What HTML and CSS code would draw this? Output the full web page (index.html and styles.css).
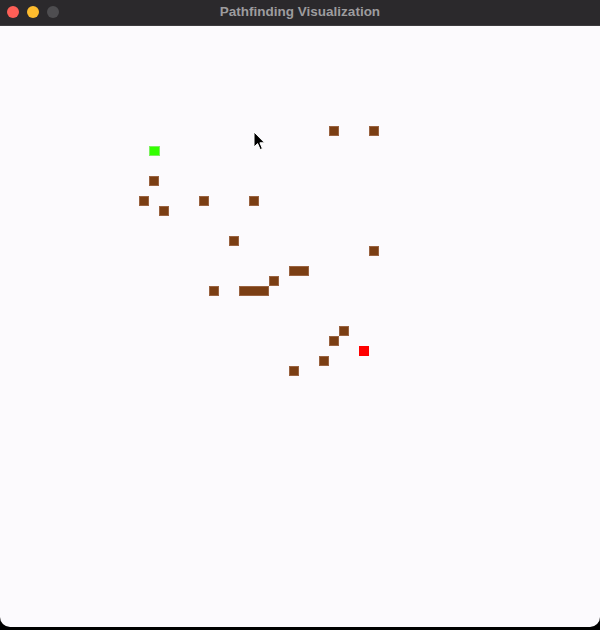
FILE: index.html
```html
<!DOCTYPE html>
<html>
<head>
<meta charset="utf-8">
<title>Pathfinding Visualization</title>
<link rel="stylesheet" href="styles.css">
</head>
<body>
<div class="window">
  <div class="titlebar">
    <div class="lights">
      <span class="light red"></span>
      <span class="light yellow"></span>
      <span class="light gray"></span>
    </div>
    <div class="title">Pathfinding Visualization</div>
  </div>
  <div class="canvas">
    <div class="grid">
      <div class="cell wall" style="grid-area:11/34/12/35"></div>
      <div class="cell wall" style="grid-area:11/38/12/39"></div>
      <div class="cell start" style="grid-area:13/16/14/17"></div>
      <div class="cell wall" style="grid-area:16/16/17/17"></div>
      <div class="cell wall" style="grid-area:18/15/19/16"></div>
      <div class="cell wall" style="grid-area:19/17/20/18"></div>
      <div class="cell wall" style="grid-area:18/21/19/22"></div>
      <div class="cell wall" style="grid-area:18/26/19/27"></div>
      <div class="cell wall" style="grid-area:22/24/23/25"></div>
      <div class="cell wall" style="grid-area:23/38/24/39"></div>
      <div class="cell wall" style="grid-area:25/30/26/32"></div>
      <div class="cell wall" style="grid-area:26/28/27/29"></div>
      <div class="cell wall" style="grid-area:27/22/28/23"></div>
      <div class="cell wall" style="grid-area:27/25/28/28"></div>
      <div class="cell wall" style="grid-area:31/35/32/36"></div>
      <div class="cell wall" style="grid-area:32/34/33/35"></div>
      <div class="cell end" style="grid-area:33/37/34/38"></div>
      <div class="cell wall" style="grid-area:34/33/35/34"></div>
      <div class="cell wall" style="grid-area:35/30/36/31"></div>
    </div>
    <svg class="cursor" width="14" height="21" viewBox="0 0 14 21">
      <path d="M1 1 L1 16 L4.6 12.6 L7.2 18.6 L9.4 17.6 L6.9 11.8 L11.6 11.8 Z" fill="#000" stroke="#fff" stroke-width="1" stroke-linejoin="round"/>
    </svg>
  </div>
</div>
</body>
</html>
```

FILE: styles.css
```css
html, body {
  margin: 0;
  padding: 0;
  background: #000;
}
.window {
  width: 600px;
  height: 627px;
  background: #fcfafd;
  border-radius: 0 0 10px 10px;
  overflow: hidden;
  display: flex;
  flex-direction: column;
}
.titlebar {
  height: 25px;
  background: #2b292c;
  border-bottom: 1px solid #3d3b3e;
  position: relative;
  display: flex;
  align-items: center;
  justify-content: center;
  flex: none;
}
.lights {
  position: absolute;
  left: 7px;
  top: 6px;
  display: flex;
  gap: 8px;
}
.light {
  width: 12px;
  height: 12px;
  border-radius: 50%;
  display: block;
}
.light.red { background: #fe5f57; }
.light.yellow { background: #febc2e; }
.light.gray { background: #4e4d50; }
.title {
  font-family: "Liberation Sans", Arial, sans-serif;
  font-weight: bold;
  font-size: 13.5px;
  color: #9d9c9e;
  line-height: 25px;
  margin-top: -2px;
}
.canvas {
  flex: 1;
  position: relative;
}
.grid {
  display: grid;
  grid-template-columns: repeat(61, 10px);
  grid-template-rows: repeat(60, 10px);
  margin-left: -1px;
}
.cell {
  box-sizing: border-box;
}
.wall {
  background: #7b3e14;
  box-shadow: inset 0 0 0 1px #9a6240;
}
.start {
  background: #33ff00;
  box-shadow: inset 0 0 0 1px #7df060;
  margin: 0 -1px 0 0;
}
.end {
  background: #ff0000;
}
.cursor {
  position: absolute;
  left: 253px;
  top: 105px;
}
```
